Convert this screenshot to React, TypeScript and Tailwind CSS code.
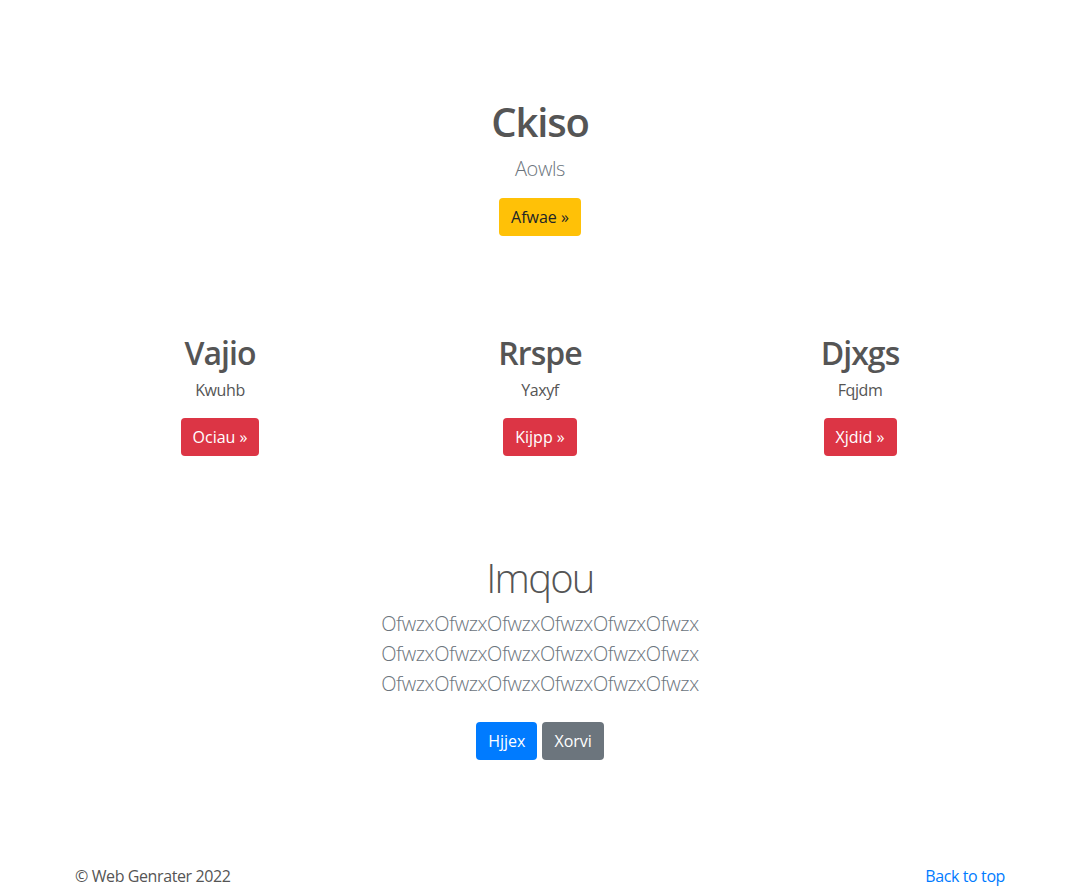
export default function App() {
  const cols = [
    { title: "Vajio", sub: "Kwuhb", btn: "Ociau" },
    { title: "Rrspe", sub: "Yaxyf", btn: "Kijpp" },
    { title: "Djxgs", sub: "Fqjdm", btn: "Xjdid" },
  ];
  const line = "OfwzxOfwzxOfwzxOfwzxOfwzxOfwzx";

  return (
    <div className="min-h-[888px] bg-white text-[#555] font-['Open_Sans','Noto_Sans',sans-serif] text-base leading-6 tracking-[-0.025em]">
      {/* Hero */}
      <section className="pt-[98px] text-center">
        <h1 className="text-[40px] leading-[48px] font-semibold tracking-[-0.03em] text-[#555]">Ckiso</h1>
        <p className="mt-[8px] text-[20px] leading-[30px] font-light text-[#6c757d]">Aowls</p>
        <div className="mt-[14px] flex justify-center">
          <button className="h-[38px] rounded px-3 bg-[#ffc107] text-[#212529] text-base tracking-normal">Afwae »</button>
        </div>
      </section>

      {/* Three columns */}
      <section className="mt-[98px] mx-auto w-[960px] px-[15px]">
        <div className="grid grid-cols-3 -mx-[15px]">
          {cols.map((c) => (
            <div key={c.title} className="px-[15px] text-center">
              <h2 className="text-[32px] leading-[38px] font-semibold tracking-[-0.03em] text-[#555]">{c.title}</h2>
              <p className="mt-[6px] text-[#555]">{c.sub}</p>
              <div className="mt-4 flex justify-center">
                <button className="h-[38px] rounded px-3 bg-[#dc3545] text-white tracking-normal">{c.btn} »</button>
              </div>
            </div>
          ))}
        </div>
      </section>

      {/* Lower block */}
      <section className="mt-[98px] text-center">
        <h1 className="text-[40px] leading-[48px] font-light tracking-[-0.045em] text-[#555]">Imqou</h1>
        <div className="mt-[7px] text-[20px] leading-[30px] font-light text-[#6c757d]">
          <p>{line}</p>
          <p>{line}</p>
          <p>{line}</p>
        </div>
        <div className="mt-[23px] flex justify-center gap-[5px]">
          <button className="h-[38px] rounded px-3 bg-[#007bff] text-white tracking-normal">Hjjex</button>
          <button className="h-[38px] rounded px-3 bg-[#6c757d] text-white tracking-normal">Xorvi</button>
        </div>
      </section>

      {/* Footer */}
      <footer className="mt-[104px] mx-auto w-[960px] px-[15px] flex justify-between">
        <p className="text-[#555]">© Web Genrater 2022</p>
        <a href="#" className="text-[#007bff]">Back to top</a>
      </footer>
    </div>
  );
}
